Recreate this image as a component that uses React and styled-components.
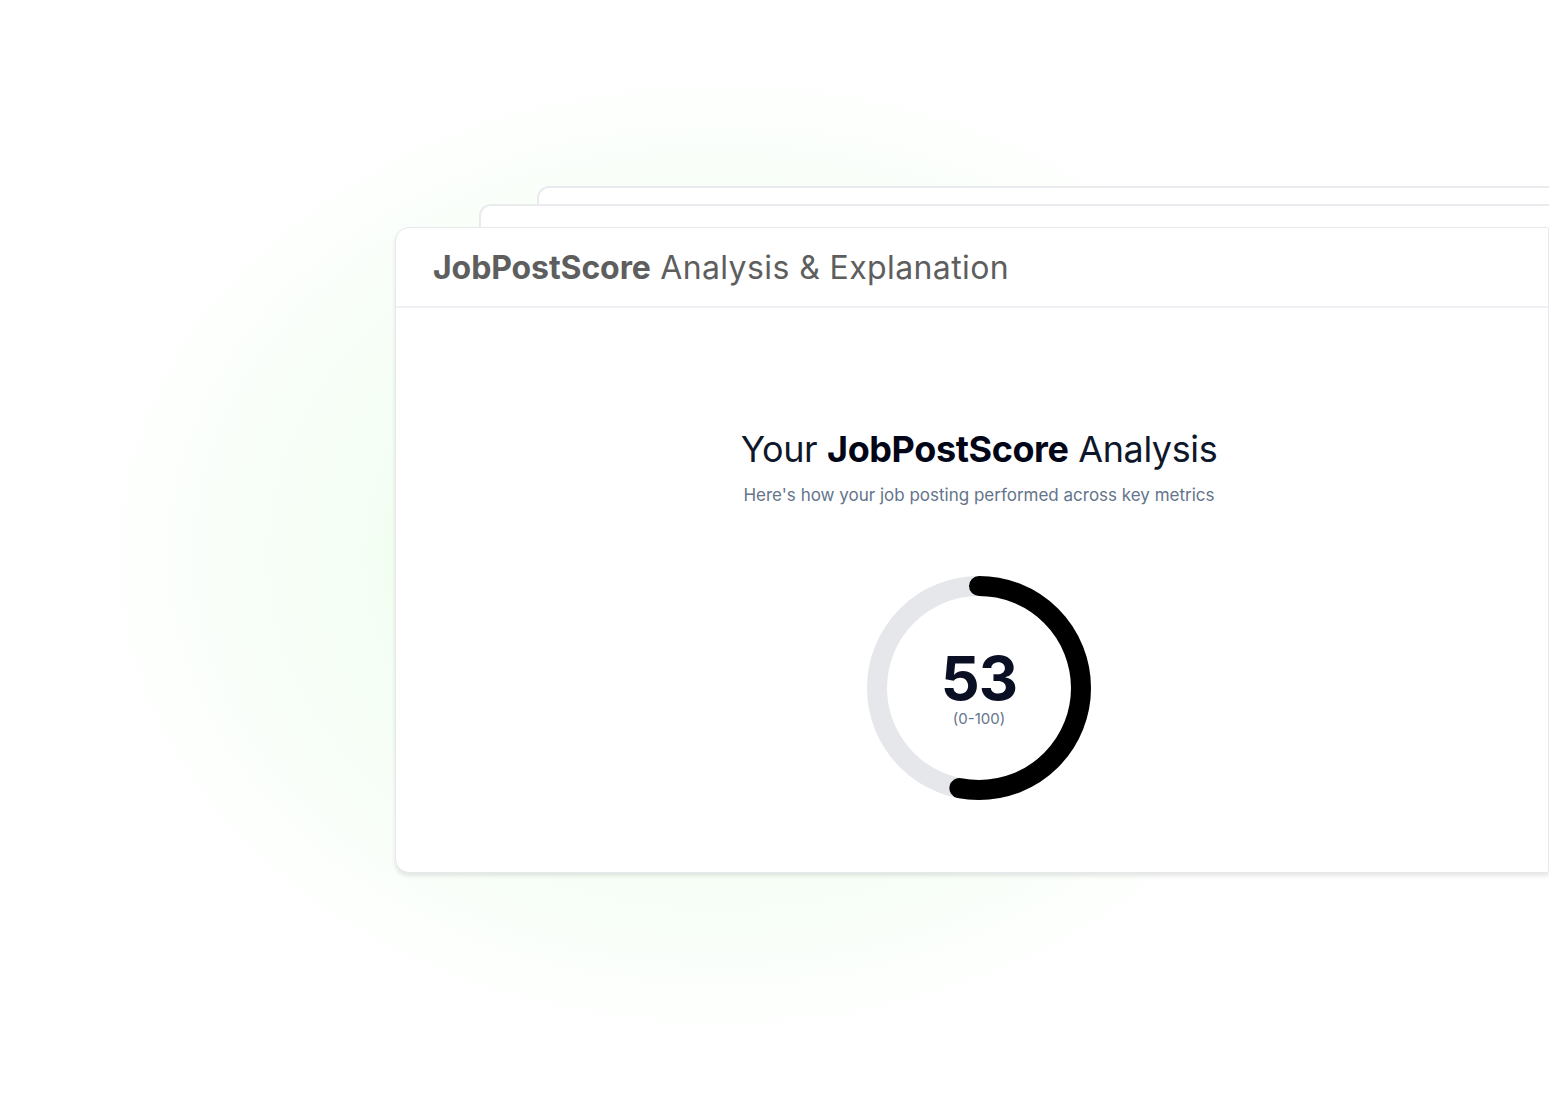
import React from 'react'
import styled, { createGlobalStyle } from 'styled-components'

const GlobalStyle = createGlobalStyle`
  html, body {
    margin: 0;
    padding: 0;
    background: #ffffff;
  }
  body {
    font-family: Inter, "Noto Sans", sans-serif;
    overflow: hidden;
  }
`

const SCORE = 53

function ScoreRing({ value }) {
  const r = 102
  const c = 2 * Math.PI * r
  const dash = (value / 100) * c
  return (
    <RingWrap>
      <svg width="224" height="224" viewBox="0 0 224 224">
        <circle cx="112" cy="112" r={r} fill="none" stroke="#e5e7eb" strokeWidth="20" />
        <circle
          cx="112"
          cy="112"
          r={r}
          fill="none"
          stroke="#000"
          strokeWidth="20"
          strokeLinecap="round"
          strokeDasharray={`${dash} ${c}`}
          transform="rotate(-90 112 112)"
        />
      </svg>
      <RingLabel>
        <Score>{value}</Score>
        <Range>(0-100)</Range>
      </RingLabel>
    </RingWrap>
  )
}

export default function App() {
  return (
    <>
      <GlobalStyle />
      <Page>
        <Stack>
          <BackCard indent={143} lift={18} />
          <BackCard indent={85} lift={23} />
          <MainCard>
            <Header>
              <Title>
                <strong>JobPostScore</strong> Analysis &amp; Explanation
              </Title>
            </Header>
            <Body>
              <Heading>
                Your <strong>JobPostScore</strong> Analysis
              </Heading>
              <Subtitle>Here's how your job posting performed across key metrics</Subtitle>
              <ScoreRing value={SCORE} />
            </Body>
          </MainCard>
        </Stack>
      </Page>
    </>
  )
}

const Page = styled.div`
  width: 1549px;
  height: 1105px;
  overflow: hidden;
  box-sizing: border-box;
  padding: 186px 0 0 395px;
  background: radial-gradient(
    ellipse 640px 500px at 720px 555px,
    rgba(214, 252, 214, 0.75) 0%,
    rgba(228, 253, 228, 0.5) 45%,
    rgba(255, 255, 255, 0) 100%
  );
`

const Stack = styled.div`
  display: flex;
  flex-direction: column;
  width: 1300px;
`

const BackCard = styled.div`
  box-sizing: border-box;
  margin-left: ${p => p.indent - 1}px;
  height: 40px;
  margin-bottom: ${p => -(40 - p.lift)}px;
  background: #fff;
  border: 2px solid #e9ebef;
  border-right: none;
  border-bottom: none;
  border-radius: 12px 0 0 0;
`

const MainCard = styled.div`
  width: 1154px;
  height: 646px;
  box-sizing: border-box;
  background: #fff;
  border: 1px solid #e6e8ec;
  border-radius: 14px 2px 2px 14px;
  box-shadow: 0 3px 4px rgba(0, 0, 0, 0.1);
  display: flex;
  flex-direction: column;
`

const Header = styled.div`
  height: 80px;
  box-sizing: border-box;
  border-bottom: 2px solid #eef0f3;
  display: flex;
  align-items: center;
  padding-left: 37px;
`

const Title = styled.h2`
  margin: 0;
  font-size: 32px;
  font-weight: 400;
  color: #5e5e5e;
  letter-spacing: 0.4px;

  strong {
    font-weight: 700;
    letter-spacing: -0.1px;
  }
`

const Body = styled.div`
  flex: 1;
  display: flex;
  flex-direction: column;
  align-items: center;
  padding: 118px 0 0 14px;
`

const Heading = styled.h1`
  margin: 0;
  font-size: 36px;
  line-height: 46px;
  font-weight: 400;
  color: #0f172a;
  letter-spacing: -0.4px;

  strong {
    font-weight: 700;
    color: #020617;
  }
`

const Subtitle = styled.p`
  margin: 12px 0 0;
  font-size: 17px;
  line-height: 22px;
  color: #64748b;
`

const RingWrap = styled.div`
  position: relative;
  width: 224px;
  height: 224px;
  margin-top: 70px;

  svg {
    display: block;
  }
`

const RingLabel = styled.div`
  position: absolute;
  inset: 0;
  display: flex;
  flex-direction: column;
  align-items: center;
  justify-content: center;
  padding-top: 2px;
`

const Score = styled.div`
  font-size: 61px;
  line-height: 56px;
  font-weight: 700;
  color: #0b0f24;
  letter-spacing: -1px;
`

const Range = styled.div`
  margin-top: 4px;
  font-size: 15px;
  line-height: 18px;
  color: #64748b;
`
